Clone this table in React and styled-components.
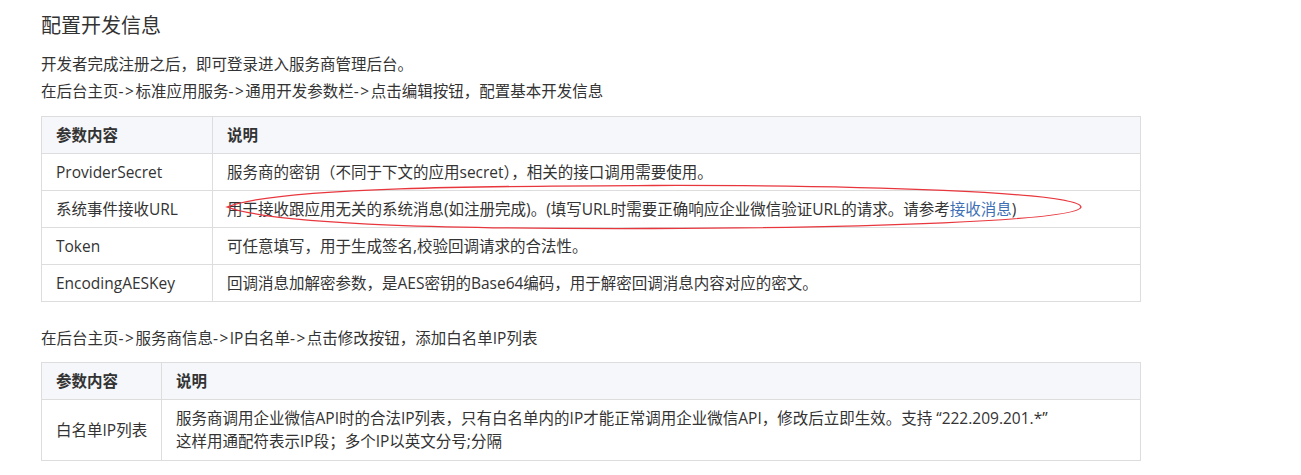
import styled, { createGlobalStyle } from "styled-components";

const GlobalStyle = createGlobalStyle`
  body {
    margin: 0;
    background: #ffffff;
    font-family: "Open Sans", "Noto Sans CJK SC", sans-serif;
    color: #333333;
  }
`;

const Seta = () => <SetaTexto>-&gt;</SetaTexto>;

const firstRows = [
  { name: "ProviderSecret", desc: "服务商的密钥（不同于下文的应用secret），相关的接口调用需要使用。" },
  {
    name: "系统事件接收URL",
    desc: "用于接收跟应用无关的系统消息(如注册完成)。(填写URL时需要正确响应企业微信验证URL的请求。请参考",
    link: "接收消息",
    tail: ")",
  },
  { name: "Token", desc: "可任意填写，用于生成签名,校验回调请求的合法性。" },
  { name: "EncodingAESKey", desc: "回调消息加解密参数，是AES密钥的Base64编码，用于解密回调消息内容对应的密文。" },
];

export default function App() {
  return (
    <Pagina>
      <GlobalStyle />
      <Titulo>配置开发信息</Titulo>
      <Texto>开发者完成注册之后，即可登录进入服务商管理后台。</Texto>
      <Texto>
        在后台主页<Seta />标准应用服务<Seta />通用开发参数栏<Seta />点击编辑按钮，配置基本开发信息
      </Texto>

      <TabelaBox>
        <Tabela>
          <colgroup>
            <col style={{ width: 171 }} />
            <col />
          </colgroup>
          <thead>
            <tr>
              <Cab>参数内容</Cab>
              <Cab>说明</Cab>
            </tr>
          </thead>
          <tbody>
            {firstRows.map((r) => (
              <tr key={r.name}>
                <Celula $nome>{r.name}</Celula>
                <Celula>
                  {r.desc}
                  {r.link && <Link>{r.link}</Link>}
                  {r.tail}
                </Celula>
              </tr>
            ))}
          </tbody>
        </Tabela>
        <Marca viewBox="0 0 880 60" width="880" height="60">
          <path
            d="M 8 31 C 60 10, 300 10, 434 9.5 C 640 9, 860 16, 862 31 C 860 45, 640 52, 434 52.5 C 250 53, 60 50, 8 31 Z"
            fill="none"
            stroke="#e8363d"
            strokeWidth="1.3"
          />
        </Marca>
      </TabelaBox>

      <Texto $topo={23}>
        在后台主页<Seta />服务商信息<Seta />IP白名单<Seta />点击修改按钮，添加白名单IP列表
      </Texto>

      <TabelaBox $topo={10}>
        <Tabela>
          <colgroup>
            <col style={{ width: 120 }} />
            <col />
          </colgroup>
          <thead>
            <tr>
              <Cab>参数内容</Cab>
              <Cab>说明</Cab>
            </tr>
          </thead>
          <tbody>
            <tr>
              <Celula $nome>白名单IP列表</Celula>
              <Celula $linhas>
                服务商调用企业微信API时的合法IP列表，只有白名单内的IP才能正常调用企业微信API，修改后立即生效。支持 “222.209.201.*”
                <br />
                这样用通配符表示IP段；多个IP以英文分号;分隔
              </Celula>
            </tr>
          </tbody>
        </Tabela>
      </TabelaBox>
    </Pagina>
  );
}

const Pagina = styled.div`
  padding: 12px 0 0 41px;
`;

const Titulo = styled.h2`
  margin: 0 0 11px;
  font-size: 20px;
  line-height: 28px;
  font-weight: 400;
  color: #333333;
`;

const Texto = styled.p`
  margin: ${(p) => p.$topo || 0}px 0 0;
  font-size: 15.5px;
  line-height: 27px;
`;

const SetaTexto = styled.span`
  letter-spacing: 1.5px;
`;

const TabelaBox = styled.div`
  position: relative;
  width: 1100px;
  margin-top: ${(p) => p.$topo || 11}px;
`;

const Tabela = styled.table`
  width: 1100px;
  table-layout: fixed;
  border-collapse: collapse;
  font-size: 15.5px;
  line-height: 22px;
`;

const Cab = styled.th`
  background: #f5f7fa;
  border: 1px solid #dddddd;
  padding: 7px 14px;
  text-align: left;
  font-weight: 700;
  color: #333333;
`;

const Celula = styled.td`
  border: 1px solid #dddddd;
  padding: 7px 14px;
  line-height: ${(p) => (p.$linhas ? "23px" : "22px")};
  white-space: ${(p) => (p.$nome ? "nowrap" : "normal")};
`;

const Link = styled.span`
  color: #3d6fb6;
`;

const Marca = styled.svg`
  position: absolute;
  left: 178px;
  top: 60px;
  pointer-events: none;
`;
